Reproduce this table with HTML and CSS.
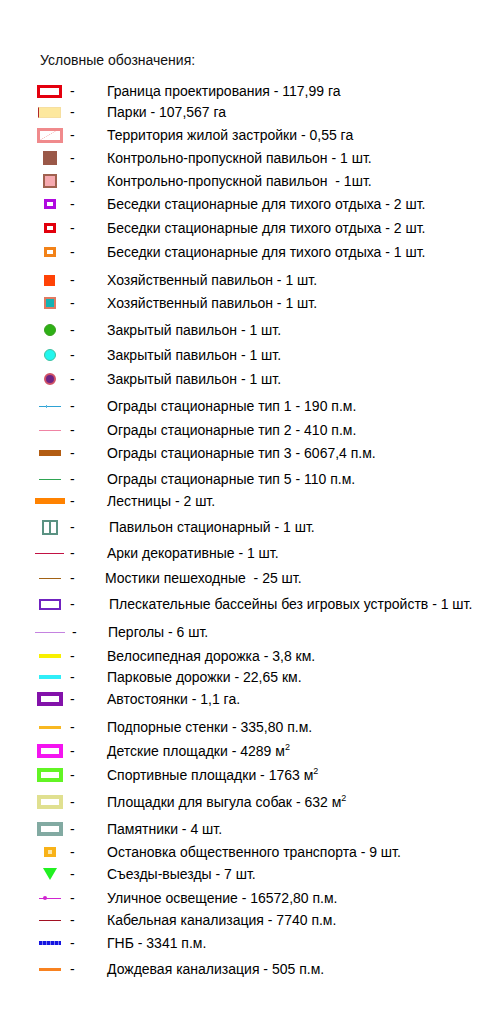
FILE: index.html
```html
<!DOCTYPE html>
<html lang="ru">
<head>
<meta charset="utf-8">
<title>Условные обозначения</title>
<link rel="stylesheet" href="styles.css">
</head>
<body>
<div class="legend">
  <div class="title">Условные обозначения:</div>
  <ul class="list">
    <li class="row"><span class="ico"><i class="box granica"></i></span><span class="dash">-</span><span class="lbl">Граница проектирования - 117,99 га</span></li>
    <li class="row"><span class="ico"><i class="box parki"></i></span><span class="dash">-</span><span class="lbl">Парки - 107,567 га</span></li>
    <li class="row"><span class="ico"><i class="box terr"></i></span><span class="dash">-</span><span class="lbl">Территория жилой застройки - 0,55 га</span></li>
    <li class="row"><span class="ico"><i class="box kpp1"></i></span><span class="dash">-</span><span class="lbl">Контрольно-пропускной павильон - 1 шт.</span></li>
    <li class="row"><span class="ico"><i class="box kpp2"></i></span><span class="dash">-</span><span class="lbl">Контрольно-пропускной павильон &nbsp;- 1шт.</span></li>
    <li class="row"><span class="ico"><i class="box bes bes-purple"></i></span><span class="dash">-</span><span class="lbl">Беседки стационарные для тихого отдыха - 2 шт.</span></li>
    <li class="row"><span class="ico"><i class="box bes bes-red"></i></span><span class="dash">-</span><span class="lbl">Беседки стационарные для тихого отдыха - 2 шт.</span></li>
    <li class="row"><span class="ico"><i class="box bes bes-orange"></i></span><span class="dash">-</span><span class="lbl">Беседки стационарные для тихого отдыха - 1 шт.</span></li>
    <li class="row"><span class="ico"><i class="box hoz1"></i></span><span class="dash">-</span><span class="lbl">Хозяйственный павильон - 1 шт.</span></li>
    <li class="row"><span class="ico"><i class="box hoz2"></i></span><span class="dash">-</span><span class="lbl">Хозяйственный павильон - 1 шт.</span></li>
    <li class="row"><span class="ico"><i class="dot dot-green"></i></span><span class="dash">-</span><span class="lbl">Закрытый павильон - 1 шт.</span></li>
    <li class="row"><span class="ico"><i class="dot dot-cyan"></i></span><span class="dash">-</span><span class="lbl">Закрытый павильон - 1 шт.</span></li>
    <li class="row"><span class="ico"><i class="dot dot-purple"></i></span><span class="dash">-</span><span class="lbl">Закрытый павильон - 1 шт.</span></li>
    <li class="row"><span class="ico"><i class="line fence1"></i></span><span class="dash">-</span><span class="lbl">Ограды стационарные тип 1 - 190 п.м.</span></li>
    <li class="row"><span class="ico"><i class="line fence2"></i></span><span class="dash">-</span><span class="lbl">Ограды стационарные тип 2 - 410 п.м.</span></li>
    <li class="row"><span class="ico"><i class="line fence3"></i></span><span class="dash">-</span><span class="lbl">Ограды стационарные тип 3 - 6067,4 п.м.</span></li>
    <li class="row"><span class="ico"><i class="line fence5"></i></span><span class="dash">-</span><span class="lbl">Ограды стационарные тип 5 - 110 п.м.</span></li>
    <li class="row"><span class="ico"><i class="line stairs"></i></span><span class="dash">-</span><span class="lbl">Лестницы - 2 шт.</span></li>
    <li class="row"><span class="ico"><i class="box pavil"></i></span><span class="dash">-</span><span class="lbl shift-r">Павильон стационарный - 1 шт.</span></li>
    <li class="row"><span class="ico"><i class="line arki"></i></span><span class="dash">-</span><span class="lbl">Арки декоративные - 1 шт.</span></li>
    <li class="row"><span class="ico"><i class="line most"></i></span><span class="dash">-</span><span class="lbl shift-l">Мостики пешеходные &nbsp;- 25 шт.</span></li>
    <li class="row"><span class="ico"><i class="box pool"></i></span><span class="dash">-</span><span class="lbl shift-r">Плескательные бассейны без игровых устройств - 1 шт.</span></li>
    <li class="row"><span class="ico"><i class="line pergola"></i></span><span class="dash shift-r">-</span><span class="lbl shift-rr">Перголы - 6 шт.</span></li>
    <li class="row"><span class="ico"><i class="line bike"></i></span><span class="dash">-</span><span class="lbl">Велосипедная дорожка - 3,8 км.</span></li>
    <li class="row"><span class="ico"><i class="line park"></i></span><span class="dash">-</span><span class="lbl">Парковые дорожки - 22,65 км.</span></li>
    <li class="row"><span class="ico"><i class="box frame frame-purple"></i></span><span class="dash">-</span><span class="lbl">Автостоянки - 1,1 га.</span></li>
    <li class="row"><span class="ico"><i class="line wall"></i></span><span class="dash">-</span><span class="lbl">Подпорные стенки - 335,80 п.м.</span></li>
    <li class="row"><span class="ico"><i class="box frame frame-magenta"></i></span><span class="dash">-</span><span class="lbl">Детские площадки - 4289 м<sup>2</sup></span></li>
    <li class="row"><span class="ico"><i class="box frame frame-green"></i></span><span class="dash">-</span><span class="lbl">Спортивные площадки - 1763 м<sup>2</sup></span></li>
    <li class="row"><span class="ico"><i class="box frame frame-khaki"></i></span><span class="dash">-</span><span class="lbl">Площадки для выгула собак - 632 м<sup>2</sup></span></li>
    <li class="row"><span class="ico"><i class="box frame frame-gray"></i></span><span class="dash">-</span><span class="lbl">Памятники - 4 шт.</span></li>
    <li class="row"><span class="ico"><i class="box stop"></i></span><span class="dash">-</span><span class="lbl">Остановка общественного транспорта - 9 шт.</span></li>
    <li class="row"><span class="ico"><i class="tri"></i></span><span class="dash">-</span><span class="lbl">Съезды-выезды - 7 шт.</span></li>
    <li class="row"><span class="ico"><i class="line light"></i></span><span class="dash">-</span><span class="lbl">Уличное освещение - 16572,80 п.м.</span></li>
    <li class="row"><span class="ico"><i class="line cable"></i></span><span class="dash">-</span><span class="lbl">Кабельная канализация - 7740 п.м.</span></li>
    <li class="row"><span class="ico"><i class="line gnb"></i></span><span class="dash">-</span><span class="lbl">ГНБ - 3341 п.м.</span></li>
    <li class="row"><span class="ico"><i class="line rain"></i></span><span class="dash">-</span><span class="lbl">Дождевая канализация - 505 п.м.</span></li>
  </ul>
</div>
</body>
</html>
```
FILE: styles.css
```css
* { box-sizing: border-box; }
html, body {
  margin: 0;
  padding: 0;
  background: #fff;
}
body {
  font-family: "Liberation Sans", Arial, sans-serif;
  font-size: 14px;
  color: #000;
  width: 504px;
  height: 1026px;
  overflow: hidden;
}
.legend {
  padding-top: 50px;
}
.title {
  padding-left: 40px;
  height: 20px;
  line-height: 20px;
  color: #111;
}
.list {
  list-style: none;
  margin: 11px 0 0 0;
  padding: 0 0 0 30px;
  display: grid;
  align-items: start;
  grid-template-rows: 21px 23px 23px 23px 23px 24px 24px 28px 23px 27px 25px 24px 27px 24px 23px 26px 22px 26px 26px 25px 26px 28px 24px 21px 22px 28px 24px 24px 27px 27px 23px 22px 24px 22px 23px 26px 20px;
}
.row {
  display: flex;
  align-items: center;
  height: 20px;
  line-height: 20px;
  white-space: nowrap;
}
.ico {
  width: 39px;
  height: 20px;
  display: flex;
  align-items: center;
  justify-content: center;
  flex: none;
}
.dash {
  width: 38px;
  flex: none;
  padding-left: 1px;
}
.dash.shift-r { padding-left: 3px; }
.lbl.shift-r { margin-left: 2px; }
.lbl.shift-rr { margin-left: 1px; }
.lbl.shift-l { margin-left: -2px; }
sup {
  font-size: 9px;
  line-height: 0;
  vertical-align: 6px;
}
i { display: block; flex: none; }

/* boxes */
.box { background: #fff; }
.granica {
  width: 25px; height: 13px;
  border: 3px solid #e4000e;
}
.parki {
  width: 23px; height: 11px;
  background: #fde89e;
  border: 1px solid #f6dfa0;
  border-left: 1px solid #b0282a;
}
.terr {
  width: 26px; height: 15px;
  border: 3px solid #f08a8c;
  background: linear-gradient(150deg, #fff 42%, #f6b8b8 44%, #fff 47%, #fff 100%);
}
.kpp1 {
  width: 14px; height: 14px;
  background: #9a5848;
}
.kpp2 {
  width: 14px; height: 14px;
  background: #f6aab0;
  border: 2px solid #a0614f;
}
.bes {
  width: 12px; height: 10px;
  border: 3px solid;
  background: #fff;
}
.bes-purple { border-color: #b00ae0; }
.bes-red { border-color: #e2000c; }
.bes-orange { border-color: #f28218; }
.hoz1 {
  width: 11px; height: 11px;
  background: #ff4206;
}
.hoz2 {
  width: 12px; height: 12px;
  background: #12b2b4;
  border: 2px solid #e07a62;
}
.dot {
  width: 12px; height: 12px;
  border-radius: 50%;
}
.dot-green { background: #2eb016; border: 1px solid #3aa020; }
.dot-cyan { background: #22f6ee; border: 1px solid #40c0a0; }
.dot-purple { background: #6e2484; border: 2px solid #d05266; }

.pavil {
  width: 16px; height: 15px;
  border: 2px solid #5a9282;
  background: linear-gradient(90deg, transparent 5px, #5a9282 5px, #5a9282 7px, transparent 7px);
}
.pool {
  width: 22px; height: 11px;
  border: 2px solid #7022c0;
}
.frame {
  width: 26px; height: 14px;
  border: 4px solid;
  background: #fff;
}
.frame-purple { border-color: #8312aa; }
.frame-magenta { border-color: #f414f0; }
.frame-green { border-color: #62f424; }
.frame-khaki { border-color: #e0e090; }
.frame-gray { border-color: #82aaa2; }
.stop {
  width: 12px; height: 10px;
  background: #fde6a6;
  border: 3px solid #f8b218;
  border-left-width: 4px;
  border-right-width: 4px;
}
.tri {
  width: 0; height: 0;
  border-left: 7px solid transparent;
  border-right: 7px solid transparent;
  border-top: 12px solid #22f022;
}

/* lines */
.line { width: 22px; }
.fence1 {
  height: 1px;
  background: #2ea2d4;
  position: relative;
}
.fence1::after {
  content: "";
  position: absolute;
  left: 7px; top: -1px;
  width: 1px; height: 3px;
  background: #5ab8e0;
}
.fence2 { height: 1px; background: #f084a4; }
.fence3 { height: 6px; background: #b25c12; }
.fence5 { height: 1px; background: #2ea452; }
.stairs { width: 30px; height: 6px; background: #ff8200; }
.arki { width: 29px; height: 1px; background: #c21244; }
.most { height: 1px; background: #a26214; }
.pergola { width: 30px; height: 1px; background: #c482e0; }
.bike { height: 4px; background: #f8f000; }
.park { height: 4px; background: #30eef8; }
.wall { height: 3px; background: #f8b822; }
.light {
  height: 1px;
  background: #d024d0;
  position: relative;
}
.light::after {
  content: "";
  position: absolute;
  left: 4px; top: -2px;
  width: 4px; height: 4px;
  border-radius: 50%;
  background: #d024d0;
}
.cable { height: 1px; background: #a21022; }
.gnb {
  height: 4px;
  background: repeating-linear-gradient(90deg, #1414e0 0 3px, #8080f0 3px 4px);
}
.rain { height: 3px; background: #f88220; }
```
